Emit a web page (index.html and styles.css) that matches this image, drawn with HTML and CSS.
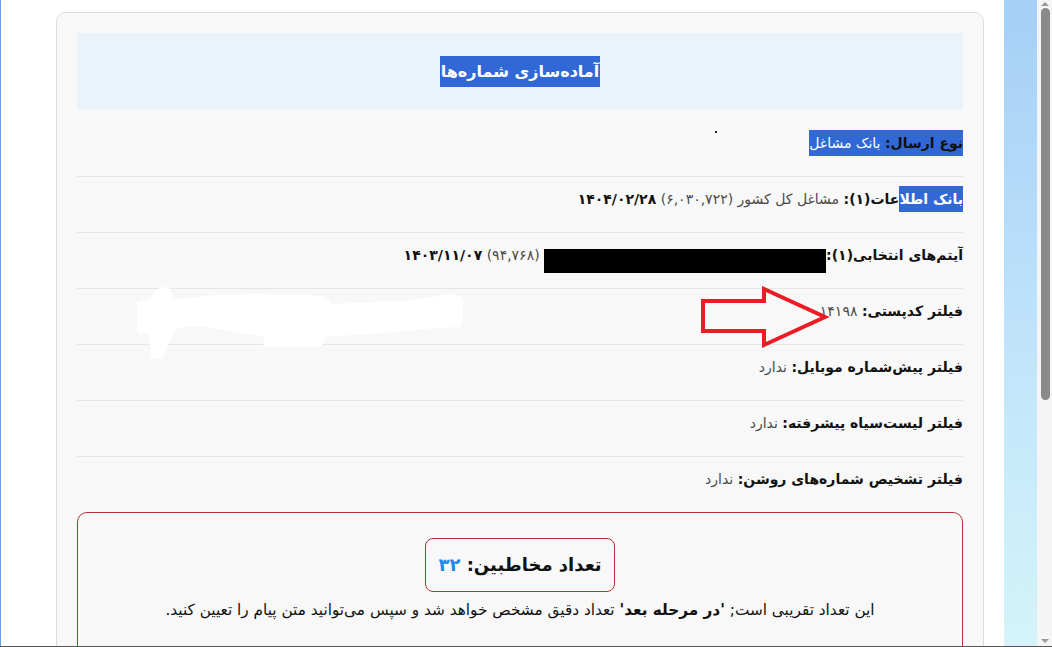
FILE: index.html
```html
<!DOCTYPE html>
<html lang="fa">
<head>
  <meta charset="UTF-8" />
  <meta name="viewport" content="width=device-width, initial-scale=1" />
  <title>آماده‌سازی شماره‌ها</title>
  <link rel="stylesheet" href="styles.css">
</head>
<body>
  <div class="page">
    <div class="card">
      <div class="card-head">
        <h2><span class="sel">آماده‌سازی شماره‌ها</span></h2>
      </div>

      <div class="rows">
        <div class="row">
          <span class="sel"><b>نوع ارسال:</b> بانک مشاغل</span>
          <span class="dot"></span>
        </div>
        <div class="row">
          <b><span class="sel">بانک اطلا</span>عات(۱):</b>
          <span class="val">مشاغل کل کشور (۶,۰۳۰,۷۲۲)</span>
          <b>۱۴۰۴/۰۲/۲۸</b>
        </div>
        <div class="row">
          <b>آیتم‌های انتخابی(۱):</b><span class="redact"></span>
          <span class="val">(۹۴,۷۶۸)</span>
          <b>۱۴۰۳/۱۱/۰۷</b>
        </div>
        <div class="row">
          <b>فیلتر کدپستی:</b> <span class="val narrow">۱۴۱۹۸</span>
          <svg class="arrow" width="130" height="64" viewBox="0 0 130 64">
            <polygon points="2,15 63,15 63,3 124,31 63,59 63,45 2,45" fill="none" stroke="#ec1c24" stroke-width="4" stroke-linejoin="miter"/>
          </svg>
          <svg class="scribble" width="330" height="78" viewBox="0 0 330 78">
            <polygon points="2,18 14,16 22,5 34,2 38,16 70,12 120,10 190,12 196,20 270,17 318,10 328,14 327,43 300,44 262,48 190,53 187,62 128,63 130,53 98,48 68,42 42,44 32,62 28,75 16,75 14,50 2,48" fill="#ffffff"/>
          </svg>
        </div>
        <div class="row">
          <b>فیلتر پیش‌شماره موبایل:</b> <span class="val">ندارد</span>
        </div>
        <div class="row">
          <b>فیلتر لیست‌سیاه پیشرفته:</b> <span class="val">ندارد</span>
        </div>
        <div class="row last">
          <b>فیلتر تشخیص شماره‌های روشن:</b> <span class="val">ندارد</span>
        </div>
      </div>

      <div class="summary">
        <div class="count">تعداد مخاطبین: <span class="num">۳۲</span></div>
        <p>این تعداد تقریبی است; <b>'در مرحله بعد'</b> تعداد دقیق مشخص خواهد شد و سپس می‌توانید متن پیام را تعیین کنید.</p>
      </div>
    </div>
  </div>

  <div class="backdrop"></div>

  <div class="scrollbar">
    <span class="arr up"></span>
    <div class="thumb"></div>
    <span class="arr down"></span>
  </div>
</body>
</html>
```

FILE: styles.css
```css
/* Reset & base */
* {
  margin: 0;
  padding: 0;
  box-sizing: border-box;
}
html, body {
  height: 100%;
  overflow: hidden;
}
body {
  display: flex;
  background: #ffffff;
  font-family: "DejaVu Sans", sans-serif;
  color: #111;
  border-bottom: 1px solid #555;
}
.page {
  width: 1004px;
  flex-shrink: 0;
  border-left: 1px solid #63a0ee;
  padding: 12px 0 0 55px;
}
.card {
  direction: rtl;
  width: 928px;
  height: 700px;
  background: #f8f8f8;
  border: 1px solid #dcdcdc;
  border-radius: 10px;
  padding: 20px;
}
.card-head {
  background: #eaf2fa;
  height: 77px;
  display: flex;
  align-items: center;
  justify-content: center;
}
.card-head h2 {
  font-size: 16px;
  font-weight: 700;
  line-height: 30px;
}
.card-head .sel {
  padding: 6px 1px;
}
.sel {
  background: #3168d5;
  color: #fff;
  padding: 5px 0;
}
.sel b {
  color: #fff;
}
.rows {
  padding-top: 11px;
}
.row {
  position: relative;
  height: 56px;
  padding-top: 10px;
  font-size: 14px;
  line-height: 24px;
  border-bottom: 1px solid #e6e6e6;
}
.row.last {
  border-bottom: none;
}
.row b {
  font-weight: 700;
  color: #111;
}
.val {
  color: #4a4a4a;
}
.narrow {
  letter-spacing: -1px;
}
.dot {
  position: absolute;
  top: 10px;
  left: 638px;
  width: 2px;
  height: 2px;
  background: #222;
}
.redact {
  display: inline-block;
  width: 282px;
  height: 24px;
  background: #000;
  vertical-align: -13px;
}
.arrow {
  position: absolute;
  top: -3px;
  left: 624px;
}
.scribble {
  position: absolute;
  top: -5px;
  left: 58px;
}
.summary {
  margin-top: -1px;
  border: 1px solid #b03636;
  border-radius: 10px;
  padding: 25px 20px 40px;
  text-align: center;
}
.count {
  display: inline-block;
  border: 1px solid #b03636;
  border-radius: 8px;
  padding: 0 12px;
  height: 54px;
  line-height: 52px;
  font-size: 18px;
  font-weight: 700;
  color: #111;
}
.num {
  color: #1d8ae6;
}
.summary p {
  margin-top: 6px;
  font-size: 15.3px;
  line-height: 24px;
  color: #111;
}
.backdrop {
  width: 33px;
  flex-shrink: 0;
  background: linear-gradient(to bottom, #a4cff6 0%, #c4e6fa 60%, #d4f3fa 100%);
}
.scrollbar {
  flex: 1;
  background: #f5f5f5;
  position: relative;
  display: flex;
  flex-direction: column;
  align-items: center;
  padding: 0 0 0 1px;
}
.thumb {
  width: 9px;
  height: 392px;
  margin-top: 2px;
  background: #8a8a8a;
  border-radius: 5px;
}
.arr {
  width: 0;
  height: 0;
  border-left: 4px solid transparent;
  border-right: 4px solid transparent;
}
.arr.up {
  margin-top: 2px;
  border-bottom: 4px solid #999;
}
.arr.down {
  position: absolute;
  bottom: 3px;
  border-top: 4px solid #999;
}
```
